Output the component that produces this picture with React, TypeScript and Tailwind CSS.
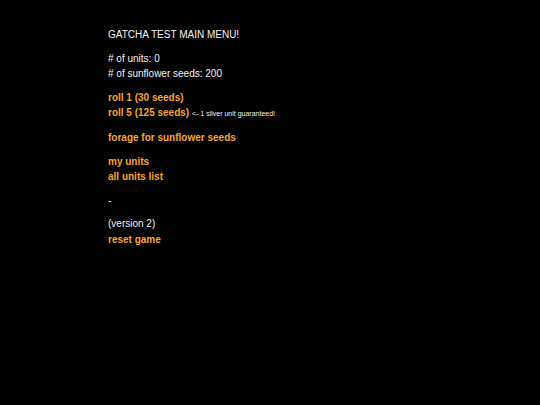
import React from 'react';

const links = 'font-bold text-[#f5a623] cursor-pointer';

export default function App() {
  return (
    <div className="min-h-[405px] bg-black text-[#f2f2f2] font-['Liberation_Sans',Arial,sans-serif] text-[10px] leading-[15.6px] pl-[108px] pt-[27px]">
      <div className="flex flex-col gap-[8px]">
        <p>GATCHA TEST MAIN MENU!</p>
        <div>
          <p># of units: 0</p>
          <p># of sunflower seeds: 200</p>
        </div>
        <div>
          <p className={links}>roll 1 (30 seeds)</p>
          <p>
            <span className={links}>roll 5 (125 seeds)</span>{' '}
            <span className="text-[7px]">&lt;- 1 silver unit guaranteed!</span>
          </p>
        </div>
        <p className={links}>forage for sunflower seeds</p>
        <div>
          <p className={links}>my units</p>
          <p className={links}>all units list</p>
        </div>
        <p>-</p>
        <div>
          <p>(version 2)</p>
          <p className={links}>reset game</p>
        </div>
      </div>
    </div>
  );
}
